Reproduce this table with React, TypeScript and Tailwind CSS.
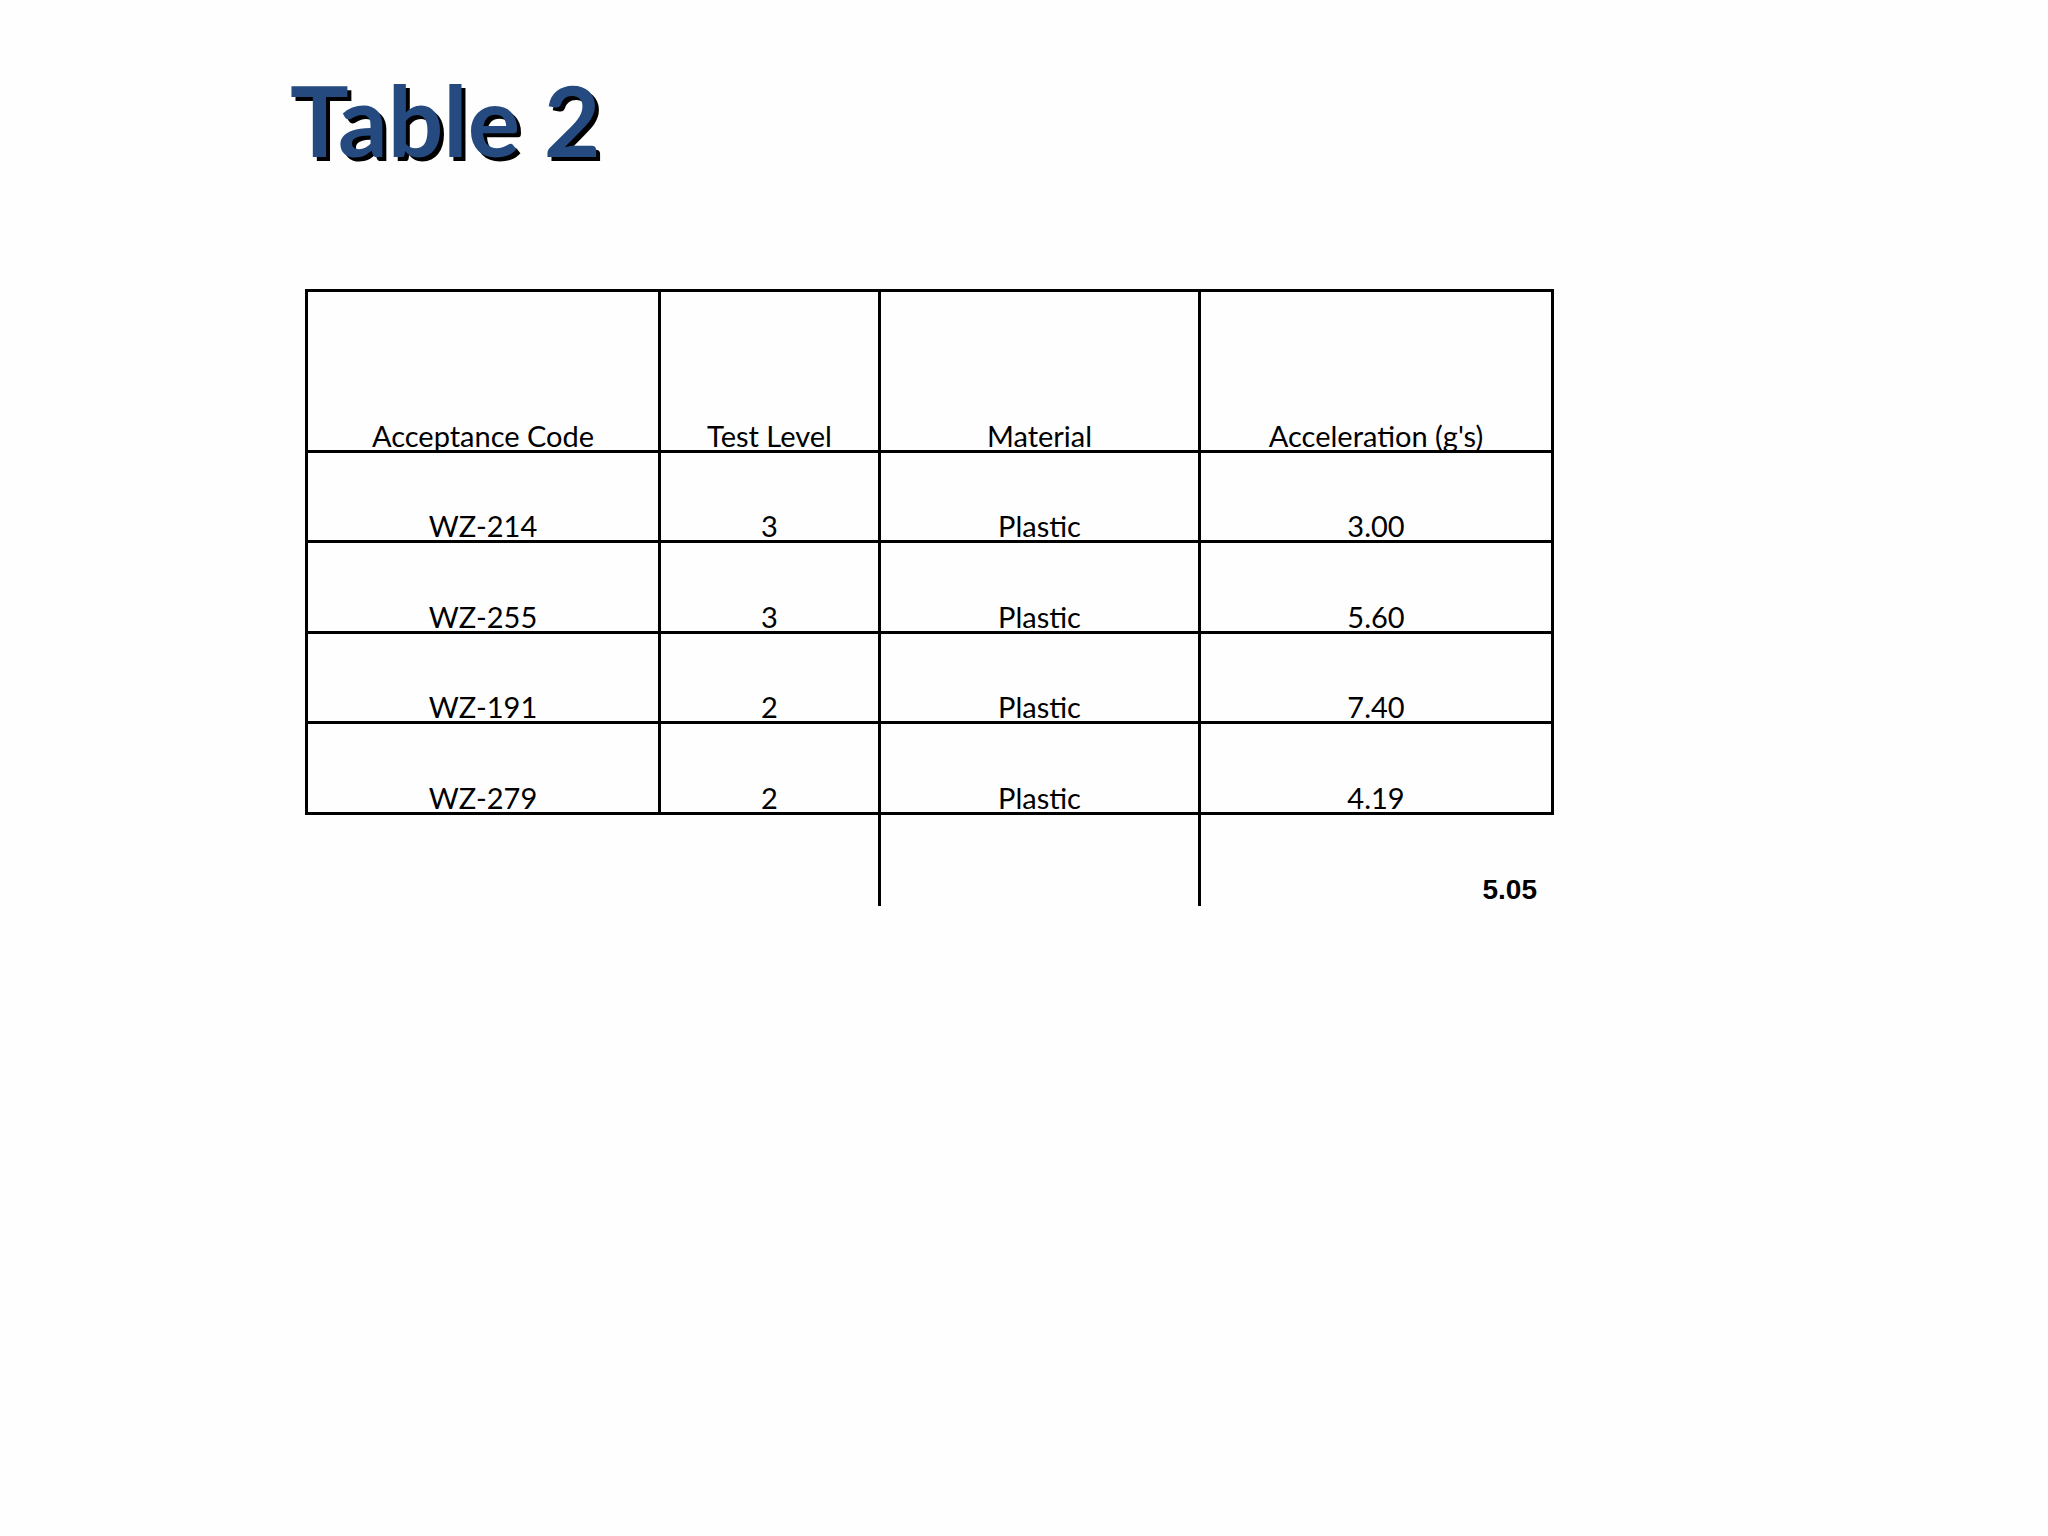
import React from "react";

const cols = ["w-[353px]", "w-[220px]", "w-[320px]", "w-[353px]"];

const header = ["Acceptance Code", "Test Level", "Material", "Acceleration (g's)"];
const rows = [
  ["WZ-214", "3", "Plastic", "3.00"],
  ["WZ-255", "3", "Plastic", "5.60"],
  ["WZ-191", "2", "Plastic", "7.40"],
  ["WZ-279", "2", "Plastic", "4.19"],
];

function Row({ cells, h }: { cells: string[]; h: string }) {
  return (
    <div className={`flex ${h}`}>
      {cells.map((c, i) => (
        <div
          key={i}
          className={`${cols[i]} shrink-0 border-r-[3px] border-b-[3px] border-black flex items-end justify-center text-[29px] leading-none text-black`}
        >
          {c}
        </div>
      ))}
    </div>
  );
}

export default function App() {
  return (
    <div className="min-h-screen w-full bg-[#fefefe]" style={{ fontFamily: "Lato, 'Open Sans', sans-serif" }}>
      <div className="pt-[70px] pl-[290px]">
        <h1
          className="text-[98px] leading-none font-bold text-[#254a80] [text-shadow:4px_4px_0_#000]"
          style={{ fontFamily: "Lato, sans-serif" }}
        >
          Table 2
        </h1>
      </div>
      <div className="pl-[305px] pt-[121px]">
        <div className="inline-flex flex-col border-t-[3px] border-l-[3px] border-black">
          <Row cells={header} h="h-[160.5px]" />
          {rows.map((r, i) => (
            <Row key={i} cells={r} h="h-[90.5px]" />
          ))}
        </div>
        <div className="flex h-[91px]">
          <div className="w-[573px] shrink-0" />
          <div className="w-[320px] shrink-0 border-l-[3px] border-black" />
          <div className="w-[353px] shrink-0 border-l-[3px] border-black flex items-end justify-end pr-[14px] pb-[2px]">
            <span
              className="text-[28px] leading-none font-bold text-black"
              style={{ fontFamily: "'Liberation Sans', Arial, sans-serif" }}
            >
              5.05
            </span>
          </div>
        </div>
      </div>
    </div>
  );
}
